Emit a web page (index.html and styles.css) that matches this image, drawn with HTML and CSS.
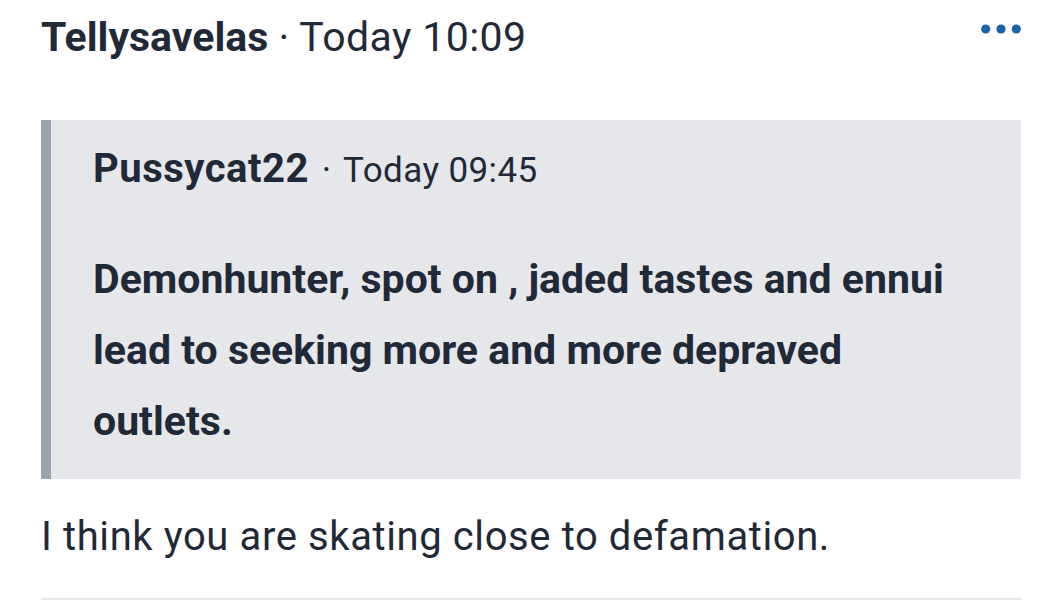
FILE: index.html
```html
<!DOCTYPE html>
<html>
<head>
<meta charset="utf-8">
<link rel="stylesheet" href="styles.css">
</head>
<body>
<article class="post">
  <header class="post-head">
    <div class="meta"><span class="author">Tellysavelas</span><span class="sep"> · </span><span class="time">Today 10:09</span></div>
    <button class="more" aria-label="More">
      <svg width="40" height="10" viewBox="0 0 40 10"><circle cx="4.7" cy="5" r="4.6" fill="#1e62a6"/><circle cx="20" cy="5" r="4.6" fill="#1e62a6"/><circle cx="35.3" cy="5" r="4.6" fill="#1e62a6"/></svg>
    </button>
  </header>
  <blockquote class="quote">
    <div class="quote-meta"><span class="qauthor">Pussycat22</span><span class="sep"> · </span><span class="qtime">Today 09:45</span></div>
    <p class="quote-text">Demonhunter, spot on , jaded tastes and ennui lead to seeking more and more depraved outlets.</p>
  </blockquote>
  <p class="body">I think you are skating close to defamation.</p>
</article>
</body>
</html>
```
FILE: styles.css
```css
* { box-sizing: border-box; }
html, body { margin: 0; padding: 0; background: #fff; }
body {
  font-family: Roboto, "Liberation Sans", sans-serif;
  color: #1f2937;
}
.post {
  margin: 0 40px 0 41px;
  border-bottom: 2px solid #e5e7eb;
  height: 600px;
  overflow: hidden;
}
.post-head {
  display: flex;
  justify-content: space-between;
  align-items: flex-start;
  height: 120px;
  padding-top: 11px;
}
.meta { font-size: 41px; line-height: 52px; }
.author { font-weight: 700; }
.sep, .time { font-weight: 400; }
.time { letter-spacing: 0.4px; }
.more {
  background: none; border: 0; padding: 0; margin: 13px 0 0 0;
  display: flex;
}
.quote {
  margin: 0;
  background: #e5e7eb;
  border-left: 10px solid #9ca3af;
  padding: 25px 60px 0 42px;
  height: 359px;
}
.quote-meta { font-size: 40px; line-height: 48px; }
.qauthor { font-weight: 700; letter-spacing: 0.5px; }
.quote-meta .sep { font-size: 36px; padding: 0 3px 0 4px; }
.qtime { font-weight: 400; font-size: 35px; letter-spacing: 0.4px; }
.quote-text {
  margin: 49px 0 0;
  font-size: 41px;
  font-weight: 700;
  line-height: 71px;
  letter-spacing: 0;
}
.body {
  margin: 32px 0 0;
  font-size: 40px;
  line-height: 52px;
  letter-spacing: 0.6px;
}
```
